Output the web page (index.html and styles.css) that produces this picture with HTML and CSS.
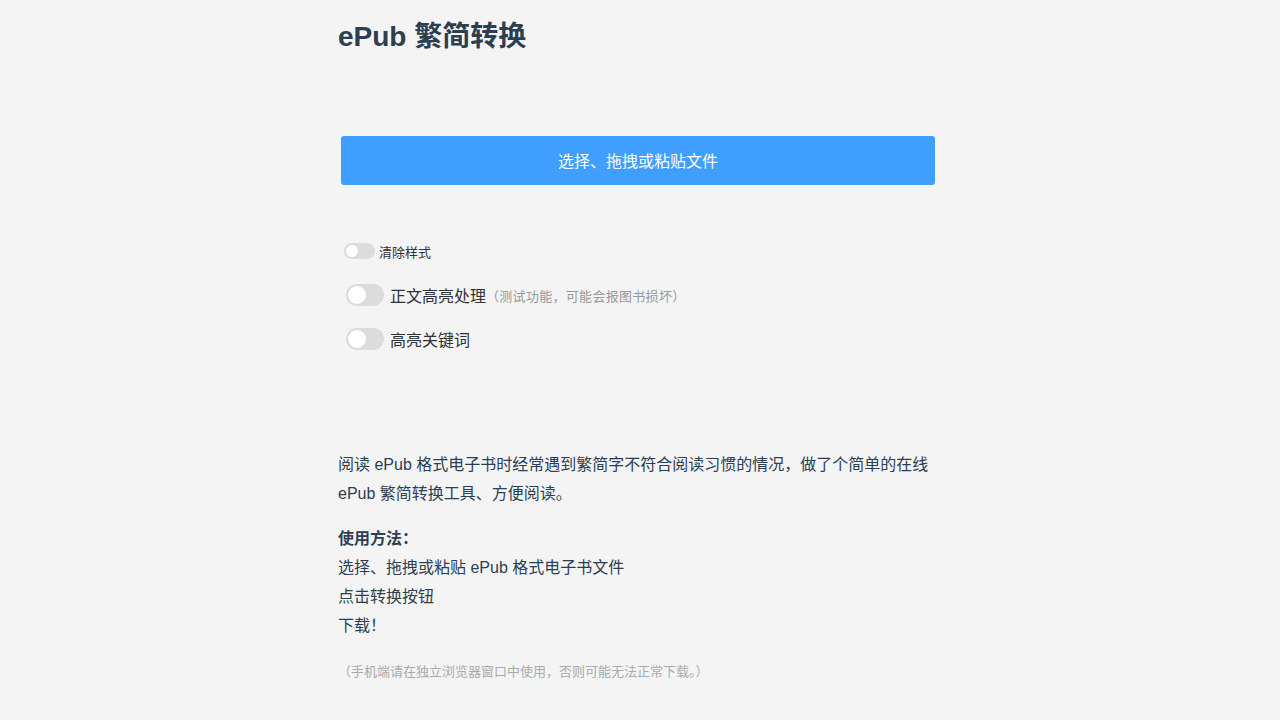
FILE: index.html
```html
<!DOCTYPE html>
<html lang="zh-CN">
<head>
<meta charset="utf-8">
<title>ePub 繁简转换</title>
<link rel="stylesheet" href="styles.css">
</head>
<body>
<div class="page">
  <h1 class="title">ePub 繁简转换</h1>
  <div class="upload">选择、拖拽或粘贴文件</div>
  <div class="options">
    <div class="row row-small">
      <span class="switch switch-small"><span class="knob"></span></span>
      <span class="label-small">清除样式</span>
    </div>
    <div class="row">
      <span class="switch"><span class="knob"></span></span>
      <span class="label">正文高亮处理</span><span class="hint">（测试功能，可能会报图书损坏）</span>
    </div>
    <div class="row">
      <span class="switch"><span class="knob"></span></span>
      <span class="label">高亮关键词</span>
    </div>
  </div>
  <div class="desc">
    <p>阅读 ePub 格式电子书时经常遇到繁简字不符合阅读习惯的情况，做了个简单的在线 ePub 繁简转换工具、方便阅读。</p>
    <p><strong>使用方法：</strong><br>选择、拖拽或粘贴 ePub 格式电子书文件<br>点击转换按钮<br>下载！</p>
    <p class="note">（手机端请在独立浏览器窗口中使用，否则可能无法正常下载。）</p>
  </div>
</div>
</body>
</html>
```

FILE: styles.css
```css
html, body {
  margin: 0;
  padding: 0;
  background: #f4f4f5;
}
body {
  font-family: "Liberation Sans", "Noto Sans CJK SC", sans-serif;
  color: #2c3e50;
}
.page {
  width: 604px;
  margin: 0 auto;
  padding-top: 19px;
}
.title {
  margin: 0;
  font-size: 28px;
  line-height: 36px;
  font-weight: bold;
  color: #2c3e50;
}
.upload {
  margin: 81px 0 0 3px;
  width: 594px;
  height: 49px;
  background: #409eff;
  border-radius: 3px;
  color: #fff;
  font-size: 16px;
  display: flex;
  align-items: center;
  justify-content: center;
  padding-bottom: 2px;
  box-sizing: border-box;
}
.options {
  margin-top: 55px;
  display: flex;
  flex-direction: column;
  gap: 22px;
}
.row {
  height: 22px;
  display: flex;
  align-items: center;
  padding-left: 8px;
}
.row-small {
  padding-left: 6px;
}
.switch {
  width: 38px;
  height: 22px;
  border-radius: 11px;
  background: #dcdcdc;
  display: flex;
  align-items: center;
  padding: 0 2px;
  box-sizing: border-box;
  margin-right: 6px;
  flex: none;
}
.knob {
  width: 18px;
  height: 18px;
  border-radius: 50%;
  background: #fff;
}
.switch-small {
  width: 31px;
  height: 16px;
  border-radius: 8px;
  margin-right: 4px;
}
.switch-small .knob {
  width: 12px;
  height: 12px;
}
.label-small {
  font-size: 13px;
  color: #303133;
}
.label {
  font-size: 16px;
  color: #303133;
}
.hint {
  font-size: 13px;
  color: #999;
  letter-spacing: 0.3px;
}
.desc {
  margin-top: 100px;
  font-size: 16px;
  line-height: 29px;
}
.desc p {
  margin: 0 0 16px;
  width: 600px;
}
.desc strong {
  font-weight: bold;
}
.desc .note {
  margin-top: 22px;
  font-size: 13px;
  line-height: 20px;
  color: #aaa;
}
```
